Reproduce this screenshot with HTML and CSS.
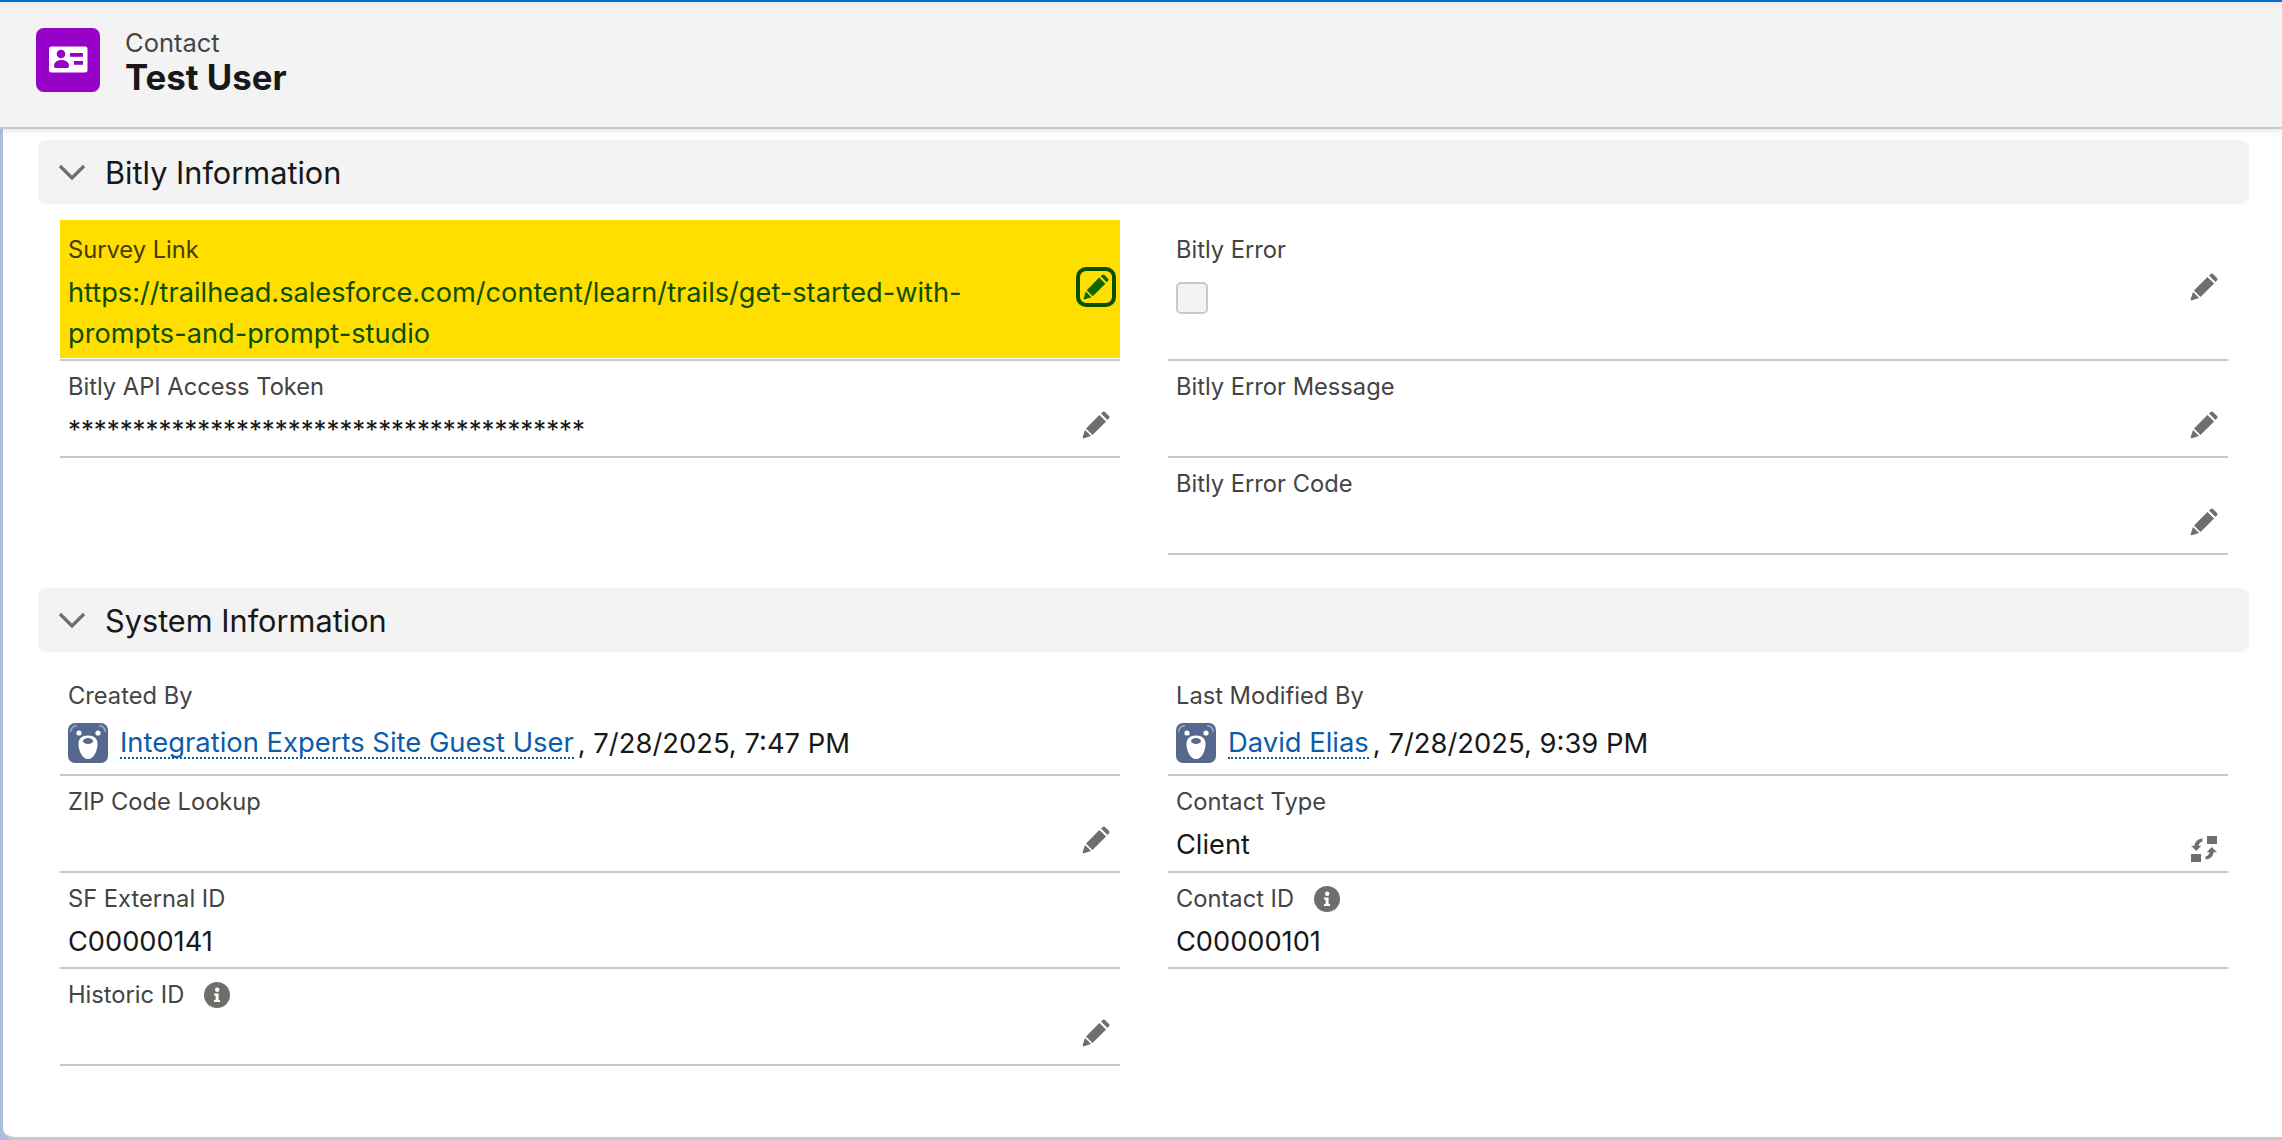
FILE: index.html
```html
<!DOCTYPE html>
<html lang="en">
<head>
    <meta charset="UTF-8">
    <title>Contact - Test User</title>
    <link rel="stylesheet" href="styles.css">
</head>
<body>
    <svg class="sprites" width="0" height="0">
        <symbol id="pencil" viewBox="0 0 28 28">
            <path d="M23.2 1.2l3.6 3.6a2 2 0 0 1 0 2.8l-1.3 1.3-6.4-6.4 1.3-1.3a2 2 0 0 1 2.8 0z"/>
            <path d="M17.4 3.9l6.7 6.7-13.6 13.4-6.5-6.5z"/>
            <path d="M3 18.9l6.1 6.1-7.2 2.3c-.8.2-1.5-.5-1.2-1.3z"/>
        </symbol>
        <symbol id="info" viewBox="0 0 26 26">
            <circle cx="13" cy="13" r="13"/>
            <circle cx="13.2" cy="7.8" r="2.2" fill="#fff"/>
            <path d="M10 11.5h4.6v6.6h1.4v2h-6v-2h1.6v-4.600h-1.600z" fill="#fff"/>
        </symbol>
        <symbol id="bear" viewBox="0 0 40 40">
            <rect width="40" height="40" rx="7" fill="#54698d"/>
            <path d="M2.500 9C3 5 5 3 9 2.500M31 2.500c4 .5 6 2.500 6.500 6.500" fill="none" stroke="#9fadc4" stroke-width="1.600"/>
            <circle cx="11" cy="10" r="2.600" fill="#fff"/>
            <circle cx="30" cy="10" r="2.600" fill="#fff"/>
            <path d="M20 12.500c6 0 9.500 3 9.500 8 0 8-4 15.500-9.500 15.500s-9.500-7.500-9.500-15.500c0-5 3.500-8 9.500-8z" fill="#fff"/>
            <ellipse cx="20" cy="18" rx="5" ry="3" fill="#54698d"/>
        </symbol>
    </svg>

    <header class="record-header">
        <div class="record-icon">
            <svg width="64" height="64" viewBox="0 0 64 64">
                <rect x="13" y="18.500" width="38.500" height="26" rx="2.500" fill="#fff"/>
                <circle cx="25" cy="26" r="4.300" fill="#9602c7"/>
                <path d="M18 38c0-3.800 3-6 7.500-6s7.500 2.200 7.500 6c0 1.200-.5 2-1.500 2H19.500c-1 0-1.500-.8-1.500-2z" fill="#9602c7"/>
                <rect x="34" y="25" width="13" height="3.800" fill="#9602c7"/>
                <rect x="38" y="33" width="9" height="3.800" fill="#9602c7"/>
            </svg>
        </div>
        <div class="record-title">
            <div class="record-type">Contact</div>
            <div class="record-name">Test User</div>
        </div>
    </header>

    <main class="page">
        <section class="section">
            <h2 class="section-head">
                <svg class="chevron" width="28" height="16" viewBox="0 0 28 16"><path d="M2 2l12 12L26 2" fill="none" stroke="#706e6b" stroke-width="3.200"/></svg>
                Bitly Information
            </h2>
            <div class="field-grid">
                <div class="field field-first field-edited">
                    <div class="field-label">Survey Link</div>
                    <div class="field-value wrap">https://trailhead.salesforce.com/content/learn/trails/get-started-with-prompts-and-prompt-studio</div>
                    <span class="edit edit-focus"><svg width="28" height="28"><use href="#pencil"/></svg></span>
                </div>
                <div class="field field-first">
                    <div class="field-label">Bitly Error</div>
                    <div class="field-value"><span class="checkbox"></span></div>
                    <span class="edit"><svg width="28" height="28"><use href="#pencil"/></svg></span>
                </div>
                <div class="field">
                    <div class="field-label">Bitly API Access Token</div>
                    <div class="field-value masked">****************************************</div>
                    <span class="edit"><svg width="28" height="28"><use href="#pencil"/></svg></span>
                </div>
                <div class="field">
                    <div class="field-label">Bitly Error Message</div>
                    <div class="field-value"></div>
                    <span class="edit"><svg width="28" height="28"><use href="#pencil"/></svg></span>
                </div>
                <div></div>
                <div class="field">
                    <div class="field-label">Bitly Error Code</div>
                    <div class="field-value"></div>
                    <span class="edit"><svg width="28" height="28"><use href="#pencil"/></svg></span>
                </div>
            </div>
        </section>

        <section class="section">
            <h2 class="section-head">
                <svg class="chevron" width="28" height="16" viewBox="0 0 28 16"><path d="M2 2l12 12L26 2" fill="none" stroke="#706e6b" stroke-width="3.200"/></svg>
                System Information
            </h2>
            <div class="field-grid system-grid">
                <div class="field field-first field-user">
                    <div class="field-label">Created By</div>
                    <div class="field-value user">
                        <svg width="40" height="40"><use href="#bear"/></svg>
                        <a class="link" href="#">Integration Experts Site Guest User</a><span class="stamp">, 7/28/2025, 7:47 PM</span>
                    </div>
                </div>
                <div class="field field-first field-user">
                    <div class="field-label">Last Modified By</div>
                    <div class="field-value user">
                        <svg width="40" height="40"><use href="#bear"/></svg>
                        <a class="link" href="#">David Elias</a><span class="stamp">, 7/28/2025, 9:39 PM</span>
                    </div>
                </div>
                <div class="field">
                    <div class="field-label">ZIP Code Lookup</div>
                    <div class="field-value"></div>
                    <span class="edit"><svg width="28" height="28"><use href="#pencil"/></svg></span>
                </div>
                <div class="field">
                    <div class="field-label">Contact Type</div>
                    <div class="field-value">Client</div>
                    <span class="edit edit-swap">
                        <svg width="26" height="26" viewBox="0 0 26 26">
                            <rect x="16" y="0" width="10" height="8"/>
                            <rect x="0" y="18" width="10" height="8"/>
                            <path d="M11.500 2.500v3c-2.200.3-3.700 2-3.900 4.300h2.600L5.300 15 0 9.800h3.500C3.800 5.500 7 2.800 11.500 2.500z"/>
                            <path d="M14.500 23.500v-3c2.200-.3 3.700-2 3.900-4.300h-2.600l4.900-5.200 5.300 5.200h-3.500c-.3 4.300-3.500 7-8 7.300z"/>
                        </svg>
                    </span>
                </div>
                <div class="field">
                    <div class="field-label">SF External ID</div>
                    <div class="field-value">C00000141</div>
                </div>
                <div class="field">
                    <div class="field-label">Contact ID <svg class="info" width="26" height="26"><use href="#info"/></svg></div>
                    <div class="field-value">C00000101</div>
                </div>
                <div class="field">
                    <div class="field-label">Historic ID <svg class="info" width="26" height="26"><use href="#info"/></svg></div>
                    <div class="field-value"></div>
                    <span class="edit"><svg width="28" height="28"><use href="#pencil"/></svg></span>
                </div>
            </div>
        </section>
    </main>
</body>
</html>
```

FILE: styles.css
```css
* {
    box-sizing: border-box;
}

html, body {
    height: 100%;
}

body {
    margin: 0;
    overflow: hidden;
    display: flex;
    flex-direction: column;
    background-color: #a9bfdd;
    font-family: Inter, "Liberation Sans", sans-serif;
    color: #181818;
}

.sprites {
    position: absolute;
}

/* Record header */
.record-header {
    position: relative;
    z-index: 2;
    height: 129px;
    flex: none;
    display: flex;
    align-items: flex-start;
    gap: 25px;
    padding: 26px 36px 0;
    background-color: #f3f3f3;
    border-top: 2px solid #0070d2;
    border-bottom: 2px solid #c9c9c9;
    box-shadow: 0 2px 6px rgba(0, 0, 0, 0.1), inset 0 6px 6px -4px rgba(0, 0, 0, 0.05);
}

.record-icon {
    width: 64px;
    height: 64px;
    border-radius: 8px;
    background-color: #9602c7;
}

.record-icon svg {
    display: block;
}

.record-type {
    font-size: 25.5px;
    line-height: 28px;
    margin-top: 1px;
    color: #444;
}

.record-name {
    font-size: 34.8px;
    line-height: 40px;
    font-weight: 700;
}

/* Page body */
.page {
    flex: 1;
    padding: 11px 33px 0 35px;
    margin-left: 3px;
    background-color: #fff;
    border-bottom: 3px solid #c5c9d0;
    border-bottom-left-radius: 12px;
}

.section + .section {
    margin-top: 33px;
}

.section-head {
    height: 64px;
    margin: 0;
    display: flex;
    align-items: center;
    gap: 19px;
    padding-left: 20px;
    border-radius: 8px;
    background-color: #f3f3f3;
    font-size: 30.7px;
    font-weight: 400;
}

.field-grid {
    display: grid;
    grid-template-columns: 1060px 1060px;
    column-gap: 48px;
    margin: 16px 0 0 22px;
}

/* Fields */
.field {
    position: relative;
    padding: 12px 8px 4px;
    min-height: 97px;
    border-bottom: 2px solid #c9c9c9;
}

.system-grid .field {
    min-height: 96.5px;
}

.field-first {
    padding: 16px 8px 5px;
}

.system-grid .field-user {
    padding-top: 14px;
    min-height: 108px;
}

.field-label {
    display: flex;
    align-items: center;
    gap: 20px;
    font-size: 23.7px;
    line-height: 28px;
    color: #444;
}

.field-value {
    margin-top: 8px;
    min-height: 42px;
    font-size: 27.2px;
    line-height: 41px;
}

.wrap {
    padding-right: 120px;
    overflow-wrap: anywhere;
}

.masked {
    font-size: 25.8px;
    line-height: 42px;
}

/* yellow stops 1px short of the border */
.field-edited {
    background: linear-gradient(#ffde00, #ffde00) top / 100% calc(100% - 1px) no-repeat padding-box;
    color: #0a4f00;
}

.field-edited .field-label {
    color: #443c00;
}

.field-edited .field-value {
    color: #0a4f00;
}

.edit {
    position: absolute;
    right: 10px;
    bottom: 17px;
    display: flex;
    fill: #706e6b;
}

.field-first .edit {
    bottom: 58px;
}

.edit-swap {
    bottom: 9px;
    right: 11px;
}

.field-first .edit-focus {
    right: 4px;
    width: 40px;
    height: 40px;
    align-items: center;
    justify-content: center;
    bottom: 52px;
    border: 4px solid #0a4f00;
    border-radius: 10px;
    fill: #0a6a00;
}

.edit-focus svg {
    width: 26px;
    height: 26px;
}

.checkbox {
    position: relative;
    top: 10px;
    display: block;
    width: 32px;
    height: 32px;
    margin-top: 2px;
    border: 2px solid #c9c9c9;
    border-radius: 5px;
    background-color: #f3f3f3;
}

.user {
    display: flex;
    align-items: center;
    gap: 12px;
    margin-top: 12px;
    font-size: 27.4px;
}

.link {
    color: #0b5cab;
    text-decoration: none;
    border-bottom: 2px dotted #0b5cab;
    line-height: 30px;
}

.stamp {
    margin-left: -8px;
}

.info {
    fill: #706e6b;
}
```
